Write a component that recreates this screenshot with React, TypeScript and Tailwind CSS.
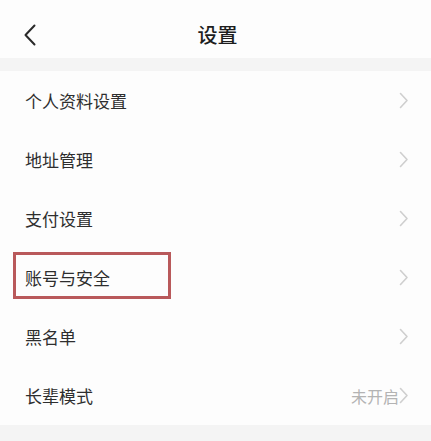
import React from "react";

const font = { fontFamily: '"Noto Sans CJK SC", "Noto Sans", sans-serif' };

function Chevron({ className = "" }: { className?: string }) {
  return (
    <svg width="10" height="17" viewBox="0 0 10 17" className={className} fill="none">
      <path d="M1.5 1.5 L8 8.5 L1.5 15.5" stroke="#cfcfcf" strokeWidth="1.6" strokeLinecap="round" strokeLinejoin="round" />
    </svg>
  );
}

function Row({ label, right, boxed }: { label: string; right?: string; boxed?: boolean }) {
  return (
    <div className="h-[59px] flex items-center justify-between pl-[25px] pr-[22px] relative">
      <span className="text-[17px] text-[#2e2e2e] leading-none">{label}</span>
      {boxed && (
        <div className="absolute left-[13px] top-[4px] w-[158px] h-[47px] border-[3px] border-[#b9595b]" />
      )}
      <div className="flex items-center">
        {right && <span className="text-[16px] text-[#b3b3b3] leading-none">{right}</span>}
        <Chevron />
      </div>
    </div>
  );
}

export default function App() {
  return (
    <div className="w-[431px] h-[441px] bg-[#f4f4f4] overflow-hidden" style={font}>
      <div className="h-[58px] bg-[#fdfdfd] flex items-center relative">
        <svg width="14" height="22" viewBox="0 0 14 22" className="absolute left-[23px] top-[24px]" fill="none">
          <path d="M11.5 1.5 L2.5 11 L11.5 20.5" stroke="#2a2a2a" strokeWidth="2" strokeLinecap="round" strokeLinejoin="round" />
        </svg>
        <div className="w-full text-center text-[20px] font-medium text-[#1e1e1e] leading-none pt-[12px] pl-[4px]">设置</div>
      </div>
      <div className="h-[13px]" />
      <div className="bg-[#fdfdfd]">
        <Row label="个人资料设置" />
        <Row label="地址管理" />
        <Row label="支付设置" />
        <Row label="账号与安全" boxed />
        <Row label="黑名单" />
        <Row label="长辈模式" right="未开启" />
      </div>
    </div>
  );
}
